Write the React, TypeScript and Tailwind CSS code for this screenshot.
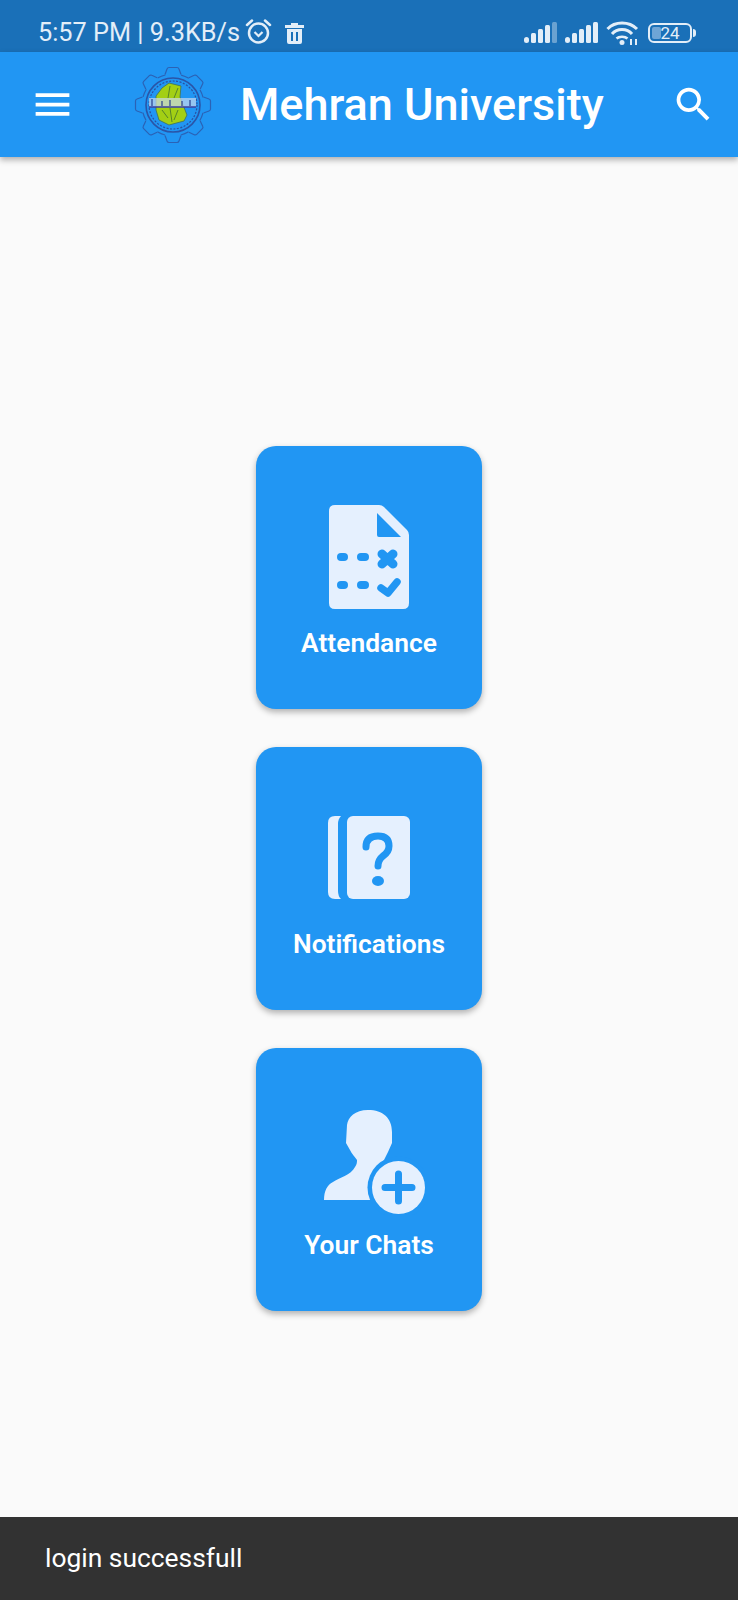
import { ReactNode } from 'react';
import { MdMenu, MdSearch } from 'react-icons/md';

const Signal = ({ faded = false }: { faded?: boolean }) => (
    <svg width="33" height="22" viewBox="0 0 33 22" fill="#e3eef8">
        <rect x="0" y="15" width="5" height="6" rx="2.5" />
        <rect x="7" y="11" width="5" height="10" rx="1.5" />
        <rect x="14" y="7" width="5" height="14" rx="1.5" />
        <rect x="21" y="3" width="5" height="18" rx="1.5" />
        <rect x="28" y="0" width="5" height="21" rx="1.5" opacity={faded ? 0.4 : 1} />
    </svg>
);

const Logo = () => {
    const teeth = [0, 45, 90, 135, 180, 225, 270, 315];
    return (
        <svg width="78" height="78" viewBox="0 0 78 78" fill="none">
            {teeth.map((a) => (
                <path
                    key={a}
                    d="M31 8.5 L33 3 Q33.5 1.5 35 1.5 L43 1.5 Q44.5 1.5 45 3 L47 8.5"
                    stroke="#2b62b5"
                    strokeWidth="1.2"
                    transform={`rotate(${a} 39 39)`}
                />
            ))}
            <circle cx="39" cy="39" r="31" stroke="#2b62b5" strokeWidth="1.2" strokeDasharray="8.35 16" strokeDashoffset="-8" />
            <circle cx="39" cy="39" r="27" stroke="#2a55a8" strokeWidth="1.6" />
            <circle cx="39" cy="39" r="24" stroke="#2a4fa0" strokeWidth="1.2" strokeDasharray="2 1.5" />
            <path
                d="M35 17 L47 20 L46 31 L53 49 L50 55 L35 59 L25 54 L22 44 L22 30 L28 22 Z"
                fill="#a3cf14"
                stroke="#3f6f5a"
                strokeWidth="0.8"
            />
            <path d="M36 20 L34 32 M44 22 L40 32 M36 42 L38 56 M28 44 L34 52 M44 44 L40 54" stroke="#41702f" strokeWidth="0.8" />
            <rect x="15" y="32" width="47" height="9" fill="#c9d8ee" opacity="0.7" />
            <path d="M15 41 L62 41" stroke="#3b3fa0" strokeWidth="1.3" />
            <path d="M18 33 L18 40 M28 35 L28 40 M36 34 L36 40 M48 35 L48 40 M56 34 L56 40" stroke="#27408f" strokeWidth="1.2" />
        </svg>
    );
};

const AttendanceIcon = () => (
    <svg width="80" height="104" viewBox="0 0 80 104">
        <path
            fillRule="evenodd"
            fill="#e5f0fe"
            d="M6 0 H50 Q53 0 55 2 L78 25 Q80 27 80 30 V98 Q80 104 74 104 H6 Q0 104 0 98 V6 Q0 0 6 0 Z M48 8 V30 Q48 32 50 32 H72 Z"
        />
        <g fill="#2196f3">
            <rect x="8" y="48" width="11" height="8" rx="4" />
            <rect x="28" y="48" width="12" height="8" rx="4" />
            <rect x="8" y="76" width="11" height="8" rx="4" />
            <rect x="28" y="76" width="12" height="8" rx="4" />
        </g>
        <path d="M53 49 L64 59 M64 49 L53 59" stroke="#2196f3" strokeWidth="9" strokeLinecap="round" />
        <path d="M52 83 L59 88 L68 77" stroke="#2196f3" strokeWidth="7.5" strokeLinecap="round" strokeLinejoin="round" fill="none" />
    </svg>
);

const NotificationsIcon = () => (
    <svg width="84" height="84" viewBox="0 0 84 84">
        <path fill="#e5f0fe" d="M8 0 H14 Q11 3 11 8 V75 Q11 80 14 83 H8 Q1 83 1 76 V7 Q1 0 8 0 Z" />
        <rect x="20" y="0" width="63" height="83" rx="6" fill="#e5f0fe" />
        <path
            d="M39 31 Q39 20 51 20 Q62 20 62 30 Q62 36 56 40 Q51 44 51 50"
            stroke="#2196f3"
            strokeWidth="7"
            strokeLinecap="round"
            fill="none"
        />
        <ellipse cx="51" cy="65" rx="6" ry="5" fill="#2196f3" />
    </svg>
);

const ChatsIcon = () => (
    <svg width="112" height="112" viewBox="-10 -6 112 112">
        <path
            fill="#e5f0fe"
            d="M45 1 C60 1 69 9 69 23 L69 34 L65 43 L61 51 L54 59 V91 H1 C1 82 4 76 10 73 C16 69 28 66 32 58 C34 55 34 53 34 51 C31 47 29 45 27 41 L23 34 L24 16 C25 8 32 1 45 1 Z"
        />
        <circle cx="75.5" cy="78.5" r="31" fill="#2196f3" />
        <circle cx="75.5" cy="78.5" r="26.5" fill="#e5f0fe" />
        <path d="M75.5 65 V92 M62 78.5 H89" stroke="#2196f3" strokeWidth="7" strokeLinecap="round" />
    </svg>
);

const HomeCard = ({ icon, label }: { icon: ReactNode; label: string }) => (
    <button className="w-[226px] h-[263px] pt-[59px] rounded-[20px] bg-[#2196f3] shadow-[0_3px_6px_rgba(0,0,0,0.3)] flex flex-col items-center">
        <div className="h-[104px] w-full flex items-center justify-center">{icon}</div>
        <div className="mt-[18px] text-[26.4px] leading-[32px] font-semibold text-white">{label}</div>
    </button>
);

const App = () => {
    return (
        <div className="relative h-[1600px] w-[738px] flex flex-col overflow-hidden bg-[#fafafa] font-['Roboto',sans-serif]">
            <div className="h-[52px] pt-[14px] bg-[#1a70b8] flex items-center pl-[38px] pr-[42px] text-[#e3eef8]">
                <span className="text-[25.3px] leading-[28px] whitespace-nowrap">5:57 PM | 9.3KB/s</span>
                <svg className="ml-[5px] -mt-[4px]" width="27" height="27" viewBox="0 0 27 27" fill="none" stroke="#e3eef8">
                    <circle cx="13.5" cy="15" r="9.5" strokeWidth="2.5" />
                    <path d="M9.5 14 L13.5 18 L17.5 14" strokeWidth="2.2" />
                    <path d="M2 7 L7 2.5 M25 7 L20 2.5" strokeWidth="2.5" strokeLinecap="round" />
                </svg>
                <svg className="ml-[13px]" width="19" height="21" viewBox="0 0 19 21" fill="#e3eef8">
                    <path d="M6 0 H13 V2 H19 V5 H0 V2 H6 Z" />
                    <path
                        fillRule="evenodd"
                        d="M2 6 H17 V19 Q17 21 15 21 H4 Q2 21 2 19 Z M6 9 V18 H8 V9 Z M11 9 V18 H13 V9 Z"
                    />
                </svg>
                <div className="ml-auto flex items-center">
                    <Signal faded />
                    <div className="ml-[8px]">
                        <Signal />
                    </div>
                    <svg className="ml-[8px]" width="33" height="25" viewBox="0 0 33 25" fill="none" stroke="#e3eef8">
                        <path d="M1.5 8 C9 0 23 0 31 8" strokeWidth="3" />
                        <path d="M6 13 C11 7 21 7 26 13" strokeWidth="3" />
                        <path d="M10.5 17.5 C13 15 19 15 21.5 17.5" strokeWidth="2.5" />
                        <circle cx="16" cy="21.5" r="2.5" fill="#e3eef8" stroke="none" />
                        <path d="M25 24 V18 M30 24 V18" strokeWidth="2" />
                    </svg>
                    <div className="ml-[9px] flex items-center">
                        <div className="relative h-[20px] w-[44px] rounded-[6px] border-2 border-[#e3eef8] flex items-center justify-center">
                            <div className="absolute left-[2px] top-[2px] bottom-[2px] w-[9px] rounded-[2px] bg-[#6fa5d6]" />
                            <span className="relative text-[17px] leading-[17px]">24</span>
                        </div>
                        <div className="ml-[1px] h-[8px] w-[3px] rounded-r-sm bg-[#e3eef8]" />
                    </div>
                </div>
            </div>

            <div className="h-[105px] bg-[#2196f3] shadow-[0_3px_6px_rgba(0,0,0,0.3)] flex items-center text-white relative">
                <MdMenu className="ml-[30px] shrink-0" size={45} />
                <div className="ml-[59px] shrink-0">
                    <Logo />
                </div>
                <h1 className="ml-[28px] text-[45px] leading-[54px] font-medium whitespace-nowrap">Mehran University</h1>
                <MdSearch className="ml-auto mr-[22px] shrink-0" size={45} />
            </div>

            <div className="flex-1 flex flex-col items-center justify-center gap-[38px]">
                <HomeCard icon={<AttendanceIcon />} label="Attendance" />
                <HomeCard icon={<NotificationsIcon />} label="Notifications" />
                <HomeCard icon={<ChatsIcon />} label="Your Chats" />
            </div>

            <div className="absolute bottom-0 left-0 right-0 h-[83px] bg-[#323232] flex items-center pl-[45px] text-[26.4px] text-white">
                login successfull
            </div>
        </div>
    );
};

export default App;
